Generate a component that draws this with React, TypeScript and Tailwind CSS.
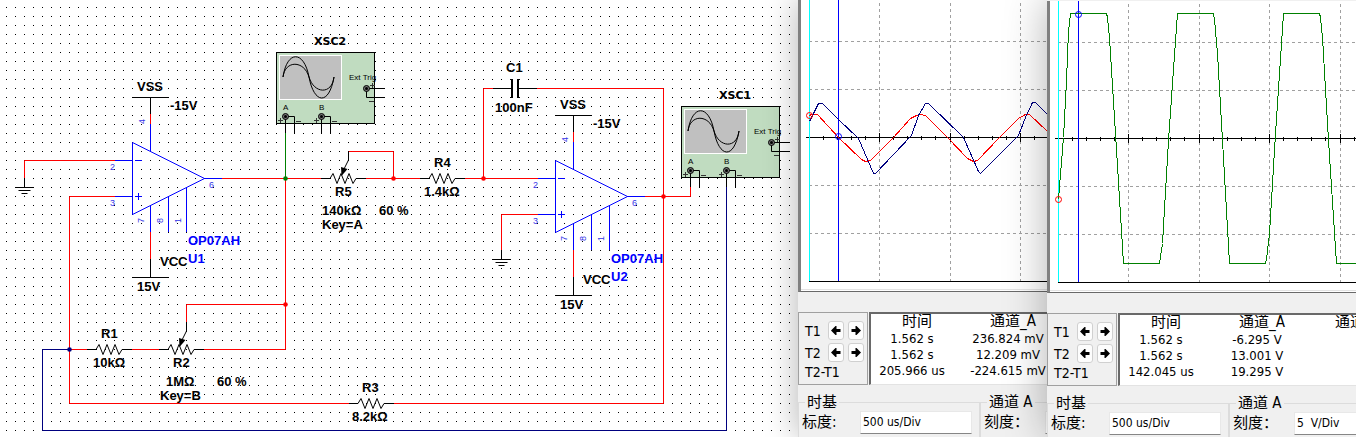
import { useId } from "react";
import type { ReactNode } from "react";

const RED = "#ff0000";
const NAVY = "#00007f";
const BLUE = "#0000ff";
const GREEN = "#008000";

function Wire({ d, color = RED }: { d: string; color?: string }) {
  return <path d={d} stroke={color} strokeWidth="1" fill="none" />;
}

function Label({ x, y, color = "#000", children }: { x: number; y: number; color?: string; children: ReactNode }) {
  return (
    <text x={x} y={y} fill={color} className="text-[13px] font-bold">
      {children}
    </text>
  );
}

function Junction({ x, y, color = RED }: { x: number; y: number; color?: string }) {
  return <circle cx={x + 0.5} cy={y + 0.5} r="2.300" fill={color} />;
}

function Ground({ x, y }: { x: number; y: number }) {
  return (
    <g transform={`translate(${x} ${y})`}>
      <Wire color="#000" d="M.5 0V9M-8.5 9.5H9.5M-5.5 12.5H6.5M-2.5 15.5H3.5" />
    </g>
  );
}

function Resistor({ x, y, wiper = false }: { x: number; y: number; wiper?: boolean }) {
  return (
    <g transform={`translate(${x} ${y})`}>
      <path
        d="M0 .5H9L12 -4.5L16 5.5L20 -4.5L24 5.5L28 -4.5L32 5.5L35 .5H45"
        stroke="#000"
        fill="none"
        strokeLinejoin="bevel"
      />
      {wiper && (
        <>
          <path d="M27.5 -27V-18L23 -9" stroke="#000" fill="none" />
          <path d="M20 -11L26.500 -9L20.500 -2Z" fill="#000" />
        </>
      )}
    </g>
  );
}

function PinNumber({ x, y, turned = false, children }: { x: number; y: number; turned?: boolean; children: ReactNode }) {
  return (
    <text
      transform={turned ? `translate(${x} ${y}) rotate(-90)` : `translate(${x} ${y})`}
      fill="#3333e8"
      className="text-[9px]"
    >
      {children}
    </text>
  );
}

function OpAmp({ x, y, name }: { x: number; y: number; name: string }) {
  return (
    <g transform={`translate(${x} ${y})`}>
      <Wire color="#000" d="M0 -44.500H37M18.500 -44V-28M18.500 117V135M0 135.500H37" />
      <Wire d="M18.500 -28V-18M18.500 90V117" />
      <Wire
        color={BLUE}
        d="M.5 .5V72.500L72.500 36.500ZM18.500 -18V9M-17 18.500H0M-17 54.500H0M72 36.500H90M18.500 63V90M36.500 54V90M54.500 45V90M3 18.500H10M3 54.500H10M6.500 51V58"
      />
      <PinNumber x={-22} y={28}>2</PinNumber>
      <PinNumber x={-22} y={64}>3</PinNumber>
      <PinNumber x={77} y={46}>6</PinNumber>
      <PinNumber turned x={13} y={-18}>4</PinNumber>
      <PinNumber turned x={12} y={81}>7</PinNumber>
      <PinNumber turned x={31} y={81}>8</PinNumber>
      <PinNumber turned x={49} y={81}>1</PinNumber>
      <Label x={5} y={-51}>VSS</Label>
      <Label x={38} y={-32}>-15V</Label>
      <Label x={28} y={124}>VCC</Label>
      <Label x={5} y={149}>15V</Label>
      <Label x={56} y={103} color={BLUE}>OP07AH</Label>
      <Label x={56} y={121} color={BLUE}>{name}</Label>
    </g>
  );
}

function Terminal({ x, y }: { x: number; y: number }) {
  return (
    <g>
      <circle cx={x + 0.5} cy={y + 0.5} r="3" fill="#777" stroke="#000" />
      <circle cx={x + 0.5} cy={y + 0.5} r="1.500" fill="#000" />
    </g>
  );
}

function Instrument({ x, y, name }: { x: number; y: number; name: string }) {
  return (
    <g transform={`translate(${x} ${y})`}>
      <text
        x="38"
        y="-7"
        className="text-[11px] font-bold"
        style={{ fontFamily: '"DejaVu Sans", Verdana, sans-serif' }}
      >
        {name}
      </text>
      <rect x=".5" y=".5" width="98" height="71" fill="#c0dcc0" stroke="#000" />
      <rect x="3.500" y="3.500" width="62" height="44" fill="#c0c0c0" stroke="#fff" />
      <path
        d="M7 25C11 -2 28 -2 33 25S53 54 58 25M7 25C9 8 28 8 33 25S56 43 58 25"
        stroke="#000"
        fill="none"
      />
      <Wire color="#000" d="M9.500 64V81M9 64.500H18.500V81M45.500 64V81M45 64.500H54.500V81M90 36.500H109M90.500 36V45.500H109" />
      <Wire color="#333" d="M2 68.500H7M4.500 66V71M20 69.500H25M38 68.500H43M40.500 66V71M56 69.500H61M94 33.500H99M96.500 31V36M93 49.500H98" />
      <Terminal x={9} y={64} />
      <Terminal x={45} y={64} />
      <Terminal x={90} y={36} />
      <text x="7" y="58" className="text-[8px]">A</text>
      <text x="43" y="58" className="text-[8px]">B</text>
      <text x="73" y="28" className="text-[8px]">Ext Trig</text>
    </g>
  );
}

function Schematic() {
  return (
    <svg
      width="799"
      height="437"
      className="block shrink-0"
      style={{ fontFamily: '"Liberation Sans", Arial, sans-serif' }}
    >
      <defs>
        <pattern id="dots" x="6" y="7" width="9" height="9" patternUnits="userSpaceOnUse">
          <rect width="1" height="1" fill="#000" />
        </pattern>
      </defs>
      <rect width="793" height="437" fill="url(#dots)" />

      <Wire d="M115 160.500H24.500V178M115 196.500H69.500V403.500H349M394 403.500H663.500V88.500H537M493 88.500H483.500V178" />
      <Wire d="M222 178.500H321M366 178.500H420M465 178.500H538M285.500 178V349.500H204M159 349.500H132M87 349.500H69" />
      <Wire d="M348 151.500H393.500V178M186.500 322V304.500H285M538 214.500H501.500V250M645 196.500H690.500V187" />
      <Wire color={GREEN} d="M285.500 133V178" />
      <Wire color={NAVY} d="M726.500 187V430.500H42.500V349.500H69" />
      <Wire color="#000" d="M493 88.500H511M519 88.500H537" />
      <rect x="511" y="79" width="2" height="19" />
      <rect x="517" y="79" width="2" height="19" />

      <Ground x={24} y={178} />
      <Ground x={501} y={250} />
      <OpAmp x={132} y={142} name="U1" />
      <OpAmp x={555} y={160} name="U2" />
      <Instrument x={276} y={52} name="XSC2" />
      <Instrument x={681} y={106} name="XSC1" />
      <Resistor x={321} y={178} wiper />
      <Resistor x={420} y={178} />
      <Resistor x={87} y={349} />
      <Resistor x={159} y={349} wiper />
      <Resistor x={349} y={403} />

      <Junction x={285} y={178} color={GREEN} />
      <Junction x={393} y={178} />
      <Junction x={483} y={178} />
      <Junction x={663} y={196} />
      <Junction x={285} y={304} />
      <Junction x={69} y={349} color={NAVY} />

      <Label x={335} y={196}>R5</Label>
      <Label x={322} y={215}>140kΩ</Label>
      <Label x={379} y={215}>60 %</Label>
      <Label x={322} y={229}>Key=A</Label>
      <Label x={434} y={167}>R4</Label>
      <Label x={424} y={196}>1.4kΩ</Label>
      <Label x={506} y={72}>C1</Label>
      <Label x={495} y={112}>100nF</Label>
      <Label x={101} y={338}>R1</Label>
      <Label x={93} y={367}>10kΩ</Label>
      <Label x={173} y={367}>R2</Label>
      <Label x={166} y={386}>1MΩ</Label>
      <Label x={217} y={386}>60 %</Label>
      <Label x={160} y={400}>Key=B</Label>
      <Label x={362} y={392}>R3</Label>
      <Label x={352} y={421}>8.2kΩ</Label>
    </svg>
  );
}

type Trace = { color: string; points: string };

type ScopeData = {
  traces: Trace[];
  cursor: number;
  markers: { x: number; y: number; color: string }[];
  columns: string[];
  rows: string[][];
};

const majors = [81, 152, 222, 293];
const minors = [25, 39, 53, 67, 95, 109, 123, 137, 166, 180, 194, 208, 236, 250, 264, 278, 307];

function Plot({ data }: { data: ScopeData }) {
  return (
    <svg width="320" height="288" className="block overflow-visible" shapeRendering="crispEdges">
      <g transform="translate(-3 0)" fill="none">
        {[41, 89, 185, 233].map((y) => (
          <path key={y} d={`M11 ${y}.5H320`} stroke="#a0a0a0" strokeDasharray="3 3" />
        ))}
        {majors.map((x) => (
          <path key={x} d={`M${x}.5 -3V281`} stroke="#a0a0a0" strokeDasharray="3 3" />
        ))}
        <path d="M8 137.500H320M11 281.500H320" stroke="#000" />
        {majors.map((x) => (
          <path key={x} d={`M${x}.5 133V142`} stroke="#000" />
        ))}
        {minors.map((x) => (
          <path key={x} d={`M${x}.5 136V140`} stroke="#000" />
        ))}
        <path d="M11.500 -2V281" stroke="#00ffff" />
        <path d={`M${data.cursor}.5 -2V281`} stroke={BLUE} />
        {data.traces.map((t) => (
          <polyline key={t.color} points={t.points} stroke={t.color} transform="translate(.5 .5)" />
        ))}
        {data.markers.map((m) => (
          <circle key={m.color} cx={m.x + 0.5} cy={m.y + 0.5} r="3" stroke={m.color} shapeRendering="auto" />
        ))}
      </g>
    </svg>
  );
}

function ArrowButton({ label, right = false }: { label: string; right?: boolean }) {
  return (
    <button
      type="button"
      aria-label={label}
      className="flex h-[19px] w-4 items-center justify-center rounded-[3px] border border-[#d0d0d0] bg-[#fdfdfd]"
    >
      <svg width="10" height="9" viewBox="0 0 10 9" className={right ? "rotate-180" : ""}>
        <path d="M0 4.500L4.500 0H5.500V3H9.500V6H5.500V9H4.500Z" fill="#000" />
      </svg>
    </button>
  );
}

function CursorRow({ name }: { name: string }) {
  return (
    <div className="flex items-center">
      <span className="w-[23px] leading-4">{name}</span>
      <span className="flex gap-1">
        <ArrowButton label={`${name} left`} />
        <ArrowButton label={`${name} right`} right />
      </span>
    </div>
  );
}

function Group({ title, label, value, labelWidth }: { title: string; label: string; value: string; labelWidth: string }) {
  const id = useId();
  return (
    <fieldset className="h-20 w-[182px] shrink-0 border border-[#dcdcdc]">
      <legend className="ml-[6px] px-[2px] text-[15px] leading-4">{title}</legend>
      <div className="flex items-center pl-[3px]">
        <label htmlFor={id} className={`text-[15px] leading-6 ${labelWidth}`}>
          {label}
        </label>
        <input
          id={id}
          defaultValue={value}
          className="h-[23px] w-[112px] shrink-0 border border-b-[#868686] border-[#e8e8e8] bg-white px-[2px] text-[12px]"
        />
      </div>
    </fieldset>
  );
}

function ScopeWindow({ data, className }: { data: ScopeData; className: string }) {
  return (
    <section
      className={`flex shrink-0 flex-col overflow-hidden bg-[#f0f0f0] text-[13px] text-black ${className}`}
      style={{ fontFamily: '"DejaVu Sans Condensed", "Noto Sans CJK SC", sans-serif' }}
    >
      <div className="h-[292px] shrink-0 overflow-hidden border-b border-l-3 border-b-[#696969] border-l-[#808080] bg-white">
        <Plot data={data} />
        <div className="mt-px h-px bg-[#e3e3e3]" />
      </div>
      <div className="mt-5 flex h-[73px] shrink-0">
        <div className="flex w-[70px] shrink-0 flex-col border border-[#a0a0a0] pt-[8px] pl-[6px] text-[14px]">
          <div className="flex flex-col gap-[3px]">
            <CursorRow name="T1" />
            <CursorRow name="T2" />
          </div>
          <span className="mt-[2px] leading-4">T2-T1</span>
        </div>
        <div className="ml-px min-w-0 flex-1 overflow-hidden border-t-2 border-b border-l-2 border-t-[#696969] border-b-[#e3e3e3] border-l-[#696969] bg-white">
          <table className="table-fixed border-collapse">
            <thead>
              <tr className="h-[17px] align-top text-[15px] leading-[15px]">
                {data.columns.map((c) => (
                  <th key={c} className="w-24 min-w-24 p-0 pr-1 text-center font-normal">{c}</th>
                ))}
              </tr>
            </thead>
            <tbody>
              {data.rows.map((row, i) => (
                <tr key={i} className="h-4 leading-4">
                  {row.map((cell, j) => (
                    <td key={j} className="p-0 pr-[14px] text-center whitespace-nowrap">{cell}</td>
                  ))}
                </tr>
              ))}
            </tbody>
          </table>
        </div>
      </div>
      <div className="mt-[9px] flex">
        <Group title="时基" label="标度:" value="500 us/Div" labelWidth="w-[58px]" />
        <Group title="通道 A" label="刻度：" value="5  V/Div" labelWidth="w-[61px]" />
      </div>
    </section>
  );
}

const mixed: ScopeData = {
  traces: [
    {
      color: RED,
      points:
        "11,115 13,114 19,114 40,137 63,159 67,161 72,160 95,137 112,118 118,115 122,114 127,115 149,137 169,158 175,161 179,160 201,137 220,118 227,114 231,114 249,131 252,134",
    },
    {
      color: NAVY,
      points:
        "11,121 20,103 24,103 40,119 60,138 75,173 77,173 113,135 120,115 127,103 130,103 165,137 180,171 182,173 220,135 227,117 234,102 237,102 249,114 252,117",
    },
  ],
  cursor: 40,
  markers: [
    { x: 11, y: 115, color: RED },
    { x: 40, y: 136, color: BLUE },
  ],
  columns: ["时间", "通道_A"],
  rows: [
    ["1.562 s", "236.824 mV"],
    ["1.562 s", "12.209 mV"],
    ["205.966 us", "-224.615 mV"],
  ],
};

const square: ScopeData = {
  traces: [
    {
      color: GREEN,
      points:
        "11,198 12,185 16,136 19,79 21,30 23,12 59,12 60,16 62,36 68,132 76,262 112,262 115,242 121,139 125,82 130,12 166,12 167,18 170,52 175,139 182,262 218,262 219,258 222,232 228,132 236,12 272,12 273,16 275,36 281,139 289,262 312,262",
    },
  ],
  cursor: 31,
  markers: [
    { x: 11, y: 198, color: RED },
    { x: 31, y: 13, color: BLUE },
  ],
  columns: ["时间", "通道_A", "通道_B"],
  rows: [
    ["1.562 s", "-6.295 V", ""],
    ["1.562 s", "13.001 V", ""],
    ["142.045 us", "19.295 V", ""],
  ],
};

export default function App() {
  return (
    <main className="flex h-screen overflow-hidden bg-white">
      <div className="min-w-0 flex-1 overflow-hidden">
        <Schematic />
      </div>
      <ScopeWindow data={mixed} className="z-10 w-[249px] shadow-[0_0_32px_rgba(0,0,0,0.3)]" />
      <ScopeWindow data={square} className="z-20 w-[309px] pt-px shadow-[0_0_40px_rgba(0,0,0,0.3)]" />
    </main>
  );
}
